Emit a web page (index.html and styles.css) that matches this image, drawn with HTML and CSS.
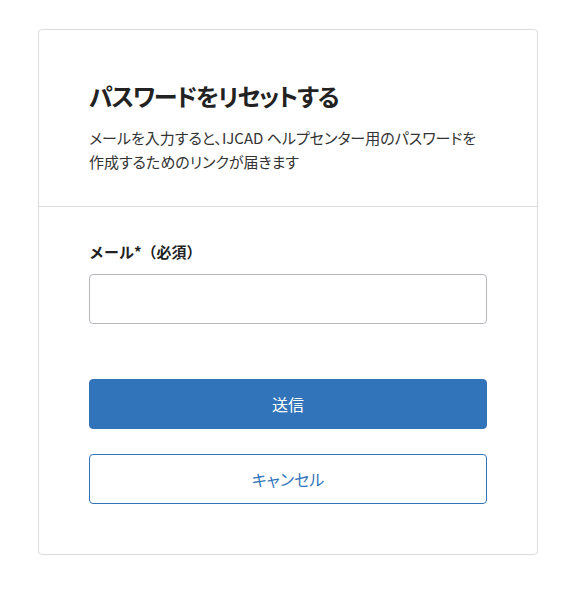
FILE: index.html
```html
<!DOCTYPE html>
<html lang="ja">
<head>
<meta charset="utf-8">
<title>パスワードをリセットする</title>
<link rel="stylesheet" href="styles.css">
</head>
<body>
<div class="card">
  <div class="card-header">
    <h1 class="title">パスワードをリセットする</h1>
    <p class="desc">メールを入力すると、IJCAD ヘルプセンター用のパスワードを作成するためのリンクが届きます</p>
  </div>
  <form class="card-body">
    <label class="label" for="email">メール*（必須）</label>
    <input class="input" id="email" type="email">
    <button class="btn btn-primary" type="button">送信</button>
    <button class="btn btn-outline" type="button">キャンセル</button>
  </form>
</div>
</body>
</html>
```
FILE: styles.css
```css
html, body {
  margin: 0;
  padding: 0;
  background: #fff;
}
body {
  font-family: "Noto Sans CJK JP", "Noto Sans", sans-serif;
  color: #2b2b2b;
  font-feature-settings: "palt";
}
.card {
  box-sizing: border-box;
  width: 500px;
  margin: 29px auto 0;
  border: 1px solid #dcdcdc;
  border-radius: 4px;
}
.card-header {
  padding: 50px 50px 32px;
  border-bottom: 1px solid #dcdcdc;
}
.title {
  margin: 0;
  font-size: 24px;
  line-height: 32px;
  font-weight: 700;
  letter-spacing: -1.2px;
  color: #222;
}
.desc {
  margin: 14px 0 0;
  font-size: 15px;
  line-height: 24px;
  color: #333;
}
.card-body {
  display: flex;
  flex-direction: column;
  padding: 33px 50px 50px;
}
.label {
  font-size: 15px;
  line-height: 24px;
  font-weight: 700;
  font-feature-settings: normal;
  color: #222;
  margin-bottom: 10px;
}
.input {
  box-sizing: border-box;
  height: 50px;
  width: 100%;
  border: 1px solid #b4b8bd;
  border-radius: 4px;
  margin: 0 0 55px;
  font-size: 16px;
}
.btn {
  box-sizing: border-box;
  height: 50px;
  width: 100%;
  border-radius: 4px;
  font-family: inherit;
  font-size: 16px;
  font-feature-settings: "palt";
}
.btn-primary {
  background: #3174b9;
  border: 1px solid #3174b9;
  color: #fff;
  margin-bottom: 25px;
}
.btn-outline {
  background: #fff;
  border: 1px solid #3174b9;
  color: #3174b9;
}
```
